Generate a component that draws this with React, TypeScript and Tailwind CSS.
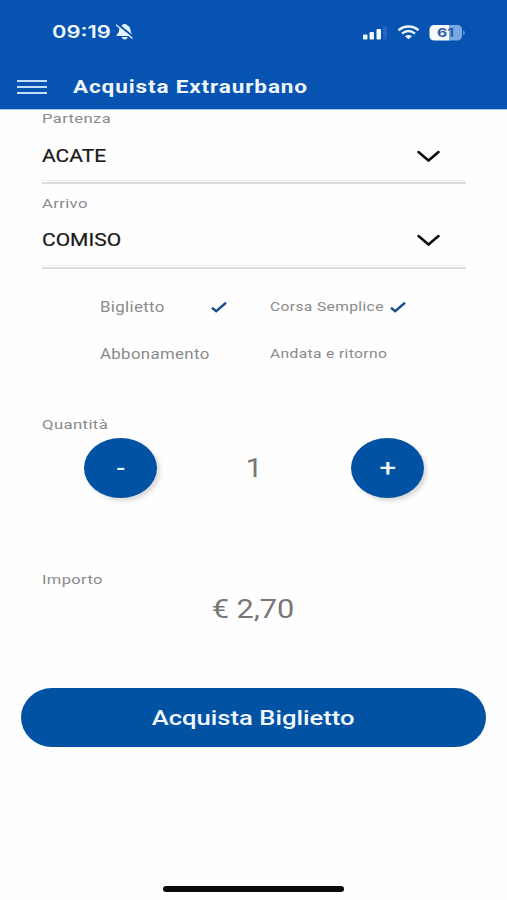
import { useState } from 'react'

const stops = [
  { id: 'from', label: 'Partenza', value: 'ACATE' },
  { id: 'to', label: 'Arrivo', value: 'COMISO' }
]

const UNIT_PRICE = 2.7

function StatusIcons() {
  return (
    <svg width="104" height="20" viewBox="0 0 104 20" fill="none">
      {/* Signal */}
      <rect x="1" y="12.500" width="4.500" height="5" rx="1" fill="#f0f7ff" />
      <rect x="7.500" y="10" width="4.500" height="7.500" rx="1" fill="#f0f7ff" />
      <rect x="14.500" y="7" width="4.500" height="10.500" rx="1" fill="#f0f7ff" />
      <rect x="21" y="4.500" width="4" height="13" rx="1" fill="#2565bf" />
      {/* Wifi */}
      <path d="M36.500 8.200C42.300 3.200 50.700 3.200 56.500 8.200" stroke="#f0f7ff" strokeWidth="2.500" />
      <path d="M40 11.700C44 8.400 49 8.400 53 11.700" stroke="#f0f7ff" strokeWidth="2.300" />
      <path d="M43 14.300C45 12.600 48 12.600 50 14.300L46.500 17.200Z" fill="#f0f7ff" />
      {/* Battery */}
      <path d="M72.500 3H87V18.500H72.500Q67.500 18.500 67.500 13.500V8Q67.500 3 72.500 3Z" fill="#f7fbff" />
      <path d="M87 3H95Q100 3 100 8V13.500Q100 18.500 95 18.500H87Z" fill="#7ba7e2" />
      <path d="M101 8.500Q103 9 103 10.800T101 13.100Z" fill="#5b90d6" />
      <text x="75" y="15" textLength="17" lengthAdjust="spacingAndGlyphs" fontSize="12" fontWeight="700" fill="#2a5caa" className="font-['Inter',sans-serif]">
        61
      </text>
    </svg>
  )
}

function BellOff() {
  return (
    <svg width="20" height="18" viewBox="0 0 20 18" fill="none" className="ml-[5px]">
      <path d="M9.500 1C11 1 11.800 1.600 12.200 2.300C14.500 3.300 15.500 5.500 15.700 8C15.900 10.300 17.500 11 17.500 13H1.500C1.500 11 3.800 10.300 4 8C4.200 5.500 4.800 3.300 7 2.300C7.500 1.600 8.300 1 9.500 1Z" fill="#e6f1ff" />
      <path d="M6.800 14H12.700C12.300 15.700 11.200 16.500 9.800 16.500S7.200 15.700 6.800 14Z" fill="#e6f1ff" />
      <path d="M2.500 1.200L18.500 14" stroke="#0753b1" strokeWidth="2.200" />
      <path d="M1 1.800L17.500 15.500" stroke="#e6f1ff" strokeWidth="1.300" />
    </svg>
  )
}

function Check() {
  return (
    <svg width="16" height="12" viewBox="0 0 16 12" fill="none">
      <path d="M1 6.800L5.200 10.200L15 1.800" stroke="#1c4f8f" strokeWidth="2.500" />
    </svg>
  )
}

export default function App() {
  const [product, setProduct] = useState('Biglietto')
  const [trip, setTrip] = useState('Corsa Semplice')
  const [quantity, setQuantity] = useState(1)

  const total = (quantity * UNIT_PRICE).toFixed(2).replace('.', ',')

  return (
    <div className="flex h-[900px] w-[507px] flex-col overflow-hidden bg-[#fefefe] font-['Roboto',sans-serif] text-[#8a8a8a]">
      <header className="h-[110px] shrink-0 border-b border-[#a9c8ee] bg-[#0753b1] text-[#f0f7ff]">
        <div className="flex h-[63px] items-center justify-between pr-[41px] pl-[52px]">
          <div className="flex items-center">
            <div className="w-[58px] pt-[1px] font-['Inter',sans-serif] text-[17.500px] font-semibold">
              <span className="inline-block origin-left scale-x-[1.25]">09:19</span>
            </div>
            <BellOff />
          </div>
          <StatusIcons />
        </div>
        <div className="flex h-[46px] items-center pt-[1px] pl-[17px]">
          <button className="flex w-[30px] flex-col gap-[4px]">
            <span className="h-[2px] bg-[#c4defa]" />
            <span className="h-[2px] bg-[#c4defa]" />
            <span className="h-[2px] bg-[#c4defa]" />
          </button>
          <h1 className="ml-[26px] origin-left scale-x-[1.25] text-[18px] font-bold tracking-[0.700px] whitespace-nowrap">
            Acquista Extraurbano
          </h1>
        </div>
      </header>

      <main className="flex flex-col">
        {stops.map((stop) => (
          <div key={stop.id} className="mr-[41px] ml-[42px] h-[84.500px]">
            <div className="h-[17px] text-[13.500px] leading-[17px]">
              <span className="inline-block origin-left scale-x-[1.23] tracking-[0.300px]">{stop.label}</span>
            </div>
            <button className="flex h-[53px] w-full items-center justify-between pt-[5px] pr-[26px]">
              <span className="inline-block origin-left scale-x-[1.2] text-[17.500px] text-[#181818] [-webkit-text-stroke:0.200px_#181818]">
                {stop.value}
              </span>
              <svg width="23" height="13" viewBox="0 0 23 13" fill="none">
                <path d="M1.500 2L11.500 10.500L21.500 2" stroke="#0a0a0a" strokeWidth="2.500" strokeLinecap="round" />
              </svg>
            </button>
            <div className="h-[4px] border-t border-b-2 border-t-[#eeeeee] border-b-[#dcdcdc]" />
          </div>
        ))}

        <div className="mt-[18px] ml-[100px] grid grid-cols-[170px_170px] grid-rows-[20px_20px] gap-y-[27px]">
          <button onClick={() => setProduct('Biglietto')} className="flex items-center text-left text-[14px]">
            <span className="w-[111px]">
              <span className="inline-block origin-left scale-x-[1.2] tracking-[0.300px]">Biglietto</span>
            </span>
            {product === 'Biglietto' && <Check />}
          </button>
          <button onClick={() => setTrip('Corsa Semplice')} className="flex items-center text-left text-[13px]">
            <span className="w-[120px]">
              <span className="inline-block origin-left scale-x-[1.2] tracking-[0.300px]">Corsa Semplice</span>
            </span>
            {trip === 'Corsa Semplice' && <Check />}
          </button>
          <button onClick={() => setProduct('Abbonamento')} className="flex items-center text-left text-[14px]">
            <span className="w-[111px]">
              <span className="inline-block origin-left scale-x-[1.2] tracking-[0.300px]">Abbonamento</span>
            </span>
            {product === 'Abbonamento' && <Check />}
          </button>
          <button onClick={() => setTrip('Andata e ritorno')} className="flex items-center text-left text-[13px]">
            <span className="w-[120px]">
              <span className="inline-block origin-left scale-x-[1.2] tracking-[0.300px]">Andata e ritorno</span>
            </span>
            {trip === 'Andata e ritorno' && <Check />}
          </button>
        </div>

        {/* Quantity */}
        <div className="mt-[50px] ml-[42px] h-[24px] text-[13.500px] leading-[20px]">
          <span className="inline-block origin-left scale-x-[1.24] tracking-[0.300px]">Quantità</span>
        </div>
        <div className="flex h-[60px] items-center justify-between pr-[83px] pl-[84px]">
          <button
            onClick={() => setQuantity(Math.max(1, quantity - 1))}
            className="flex h-[60px] w-[73px] items-center justify-center rounded-[50%] bg-[#0252a4] text-[22px] font-medium text-[#e6f3ff] shadow-[3px_3px_4px_rgba(0,0,0,0.15)]"
          >
            <span className="inline-block scale-x-[1.2]">-</span>
          </button>
          <span className="inline-block scale-x-[1.22] pt-[2px] text-[25px] text-[#777777]">{quantity}</span>
          <button
            onClick={() => setQuantity(quantity + 1)}
            className="flex h-[60px] w-[73px] items-center justify-center rounded-[50%] bg-[#0252a4] text-[24px] text-[#f0f7ff] shadow-[3px_3px_4px_rgba(0,0,0,0.15)]"
          >
            <span className="inline-block scale-x-[1.22] [-webkit-text-stroke:0.200px_#f0f7ff]">+</span>
          </button>
        </div>

        {/* Amount */}
        <div className="mt-[71px] ml-[42px] h-[20px] text-[13.500px] leading-[20px]">
          <span className="inline-block origin-left scale-x-[1.22] tracking-[0.300px]">Importo</span>
        </div>
        <div className="mt-[4px] flex h-[32px] items-center justify-center text-[26px] text-[#777777]">
          <span className="inline-block scale-x-[1.180]">€ {total}</span>
        </div>

        <button className="mx-[21px] mt-[63px] flex h-[59px] items-center justify-center rounded-[31px/29.500px] bg-[#0252a4] pt-[2px] text-[21px] font-medium text-[#f0f7ff]">
          <span className="inline-block scale-x-[1.22]">Acquista Biglietto</span>
        </button>
      </main>

      <div className="mt-auto mb-[8px] h-[6px] w-[181px] self-center rounded-full bg-[#0a0a0a]" />
    </div>
  )
}
